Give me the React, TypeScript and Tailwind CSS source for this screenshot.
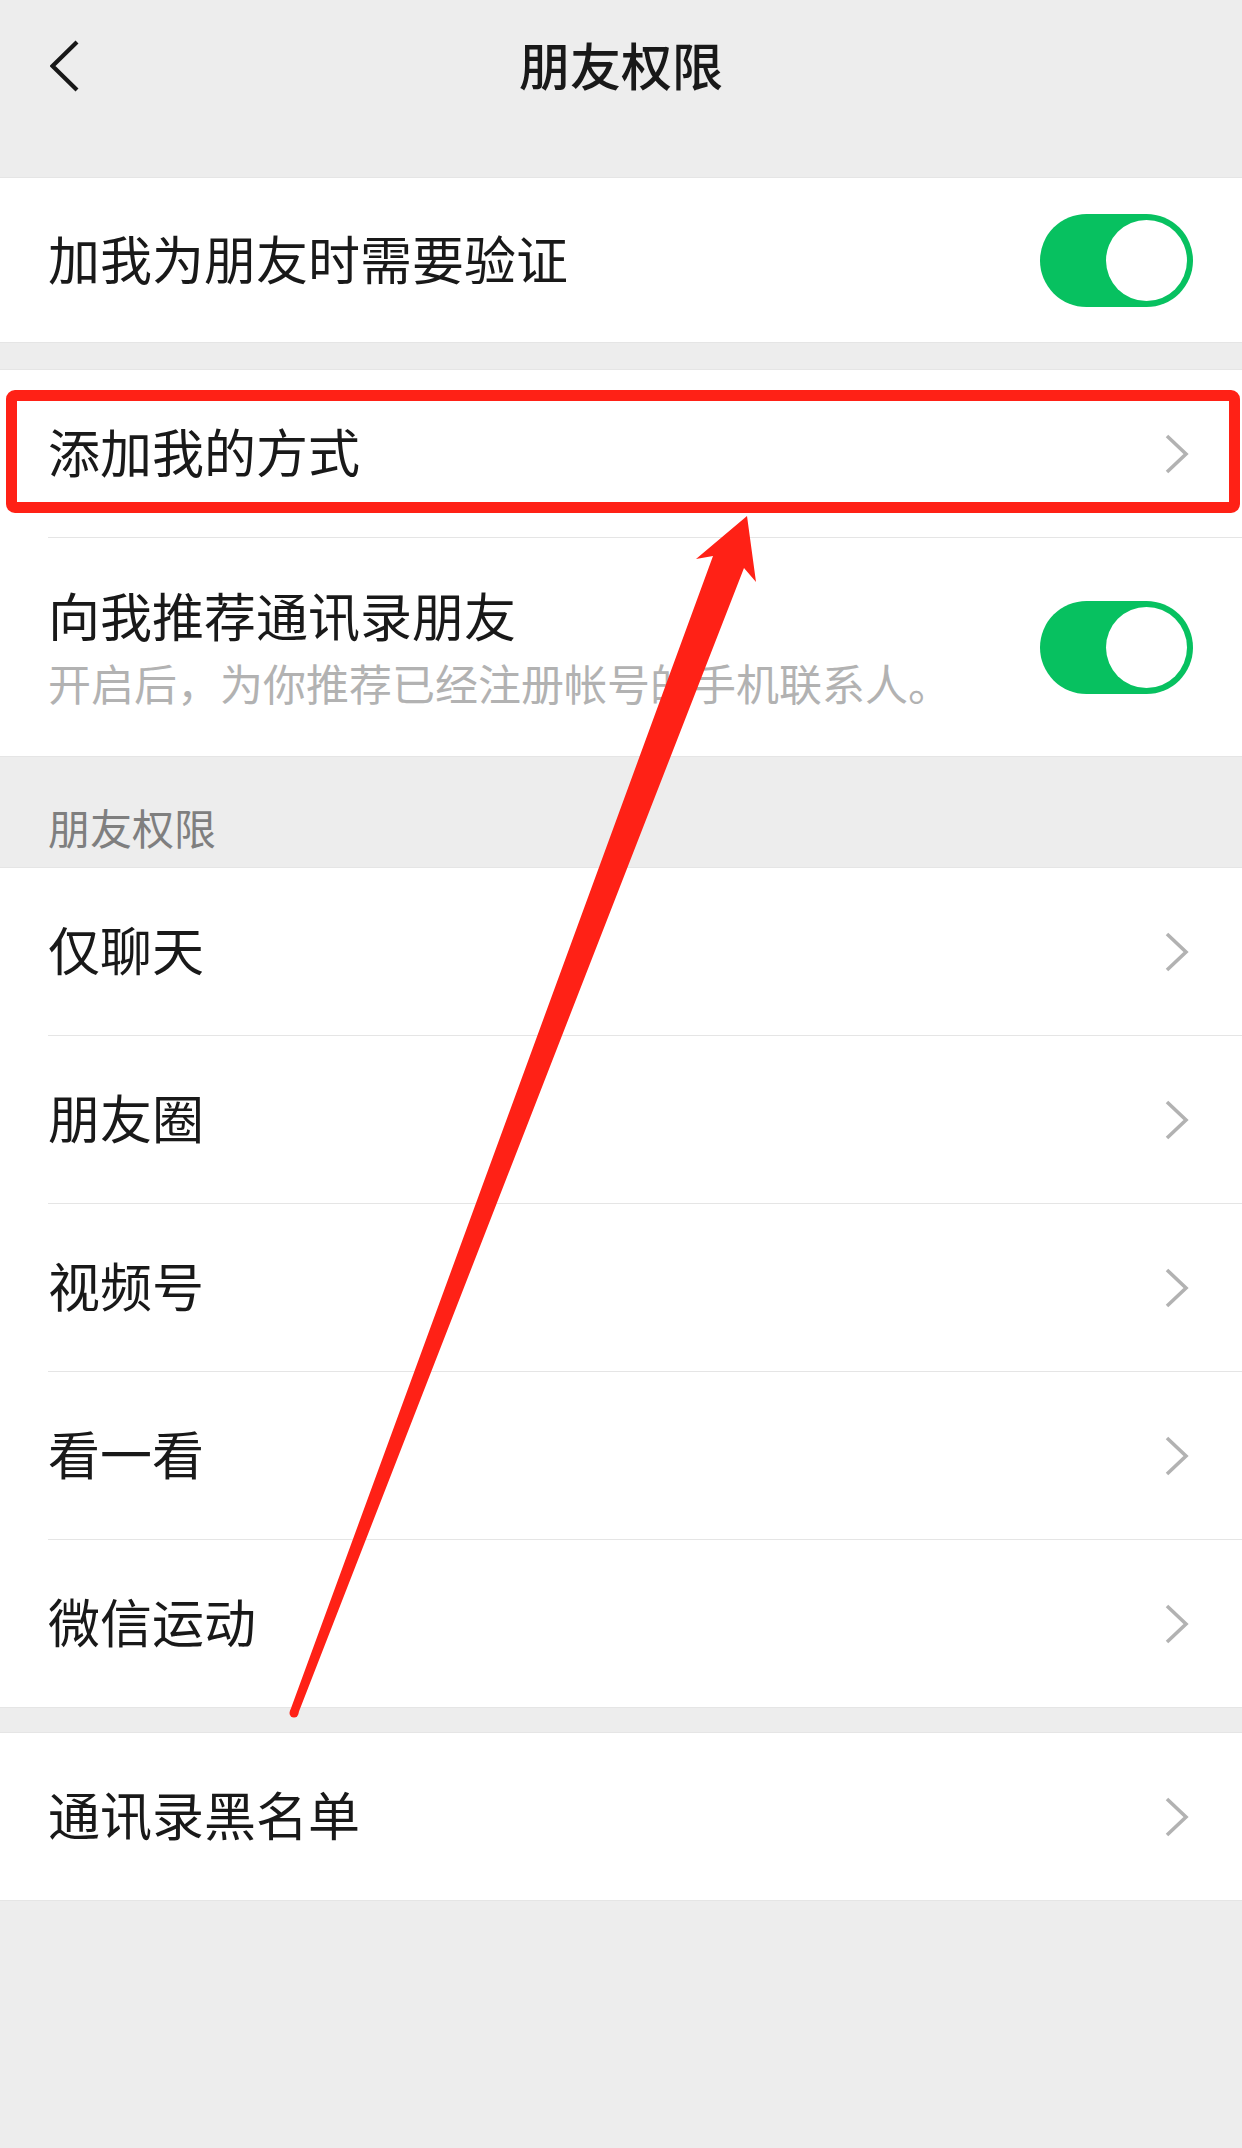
import React from "react";

const FONT = { fontFamily: '"Noto Sans CJK SC", "Noto Sans", sans-serif' };

function Chevron() {
  return (
    <svg width="26" height="40" viewBox="0 0 26 40" className="shrink-0">
      <polyline points="3,2 22,20 3,38" fill="none" stroke="#b2b2b2" strokeWidth="3.6" strokeLinejoin="miter" />
    </svg>
  );
}

function Toggle() {
  return (
    <div className="w-[153px] h-[93px] rounded-full bg-[#07c160] flex items-center justify-end px-[6px] shrink-0">
      <div className="w-[81px] h-[81px] rounded-full bg-white" />
    </div>
  );
}

function Sep() {
  return <div className="ml-[48px] h-px bg-[#e5e5e5]" />;
}

function LinkRow({ label }: { label: string }) {
  return (
    <div className="h-[167px] flex items-center justify-between pl-[48px] pr-[52px]">
      <span className="text-[52px] leading-[72px] pb-[5px] text-[#191919]">{label}</span>
      <Chevron />
    </div>
  );
}

export default function App() {
  return (
    <div className="relative w-[1242px] min-h-[2148px] bg-[#ededed] overflow-hidden" style={FONT}>
      {/* Header */}
      <div className="h-[177px] grid grid-cols-[1fr_auto_1fr] items-start pt-[28px]">
        <div className="pt-[12px] pl-[50px]">
          <svg width="30" height="52" viewBox="0 0 30 52">
            <polyline points="27,2 2.5,26 27,50" fill="none" stroke="#181818" strokeWidth="4.2" />
          </svg>
        </div>
        <div className="text-[51px] leading-[72px] font-medium text-[#191919] whitespace-nowrap">朋友权限</div>
        <div />
      </div>

      {/* Section 1 */}
      <div className="bg-white border-y border-[#e5e5e5]">
        <div className="h-[164px] flex items-center justify-between pl-[48px] pr-[49px]">
          <span className="text-[52px] leading-[72px] pb-[5px] text-[#191919]">加我为朋友时需要验证</span>
          <Toggle />
        </div>
      </div>

      <div className="h-[26px]" />

      {/* Section 2 */}
      <div className="bg-white border-y border-[#e5e5e5]">
        <LinkRow label="添加我的方式" />
        <Sep />
        <div className="h-[218px] flex items-center justify-between pl-[48px] pr-[49px]">
          <div className="flex flex-col pb-[5px]">
            <span className="text-[52px] leading-[72px] text-[#191919]">向我推荐通讯录朋友</span>
            <span className="mt-[2px] text-[43px] leading-[58px] text-[#b2b2b2]">开启后，为你推荐已经注册帐号的手机联系人。</span>
          </div>
          <Toggle />
        </div>
      </div>

      {/* Section header */}
      <div className="h-[110px] flex items-end pl-[48px] pb-[11px]">
        <span className="text-[42px] leading-[58px] text-[#7f7f7f]">朋友权限</span>
      </div>

      {/* Section 3 */}
      <div className="bg-white border-y border-[#e5e5e5]">
        <LinkRow label="仅聊天" />
        <Sep />
        <LinkRow label="朋友圈" />
        <Sep />
        <LinkRow label="视频号" />
        <Sep />
        <LinkRow label="看一看" />
        <Sep />
        <LinkRow label="微信运动" />
      </div>

      <div className="h-[24px]" />

      {/* Section 4 */}
      <div className="bg-white border-y border-[#e5e5e5]">
        <LinkRow label="通讯录黑名单" />
      </div>

      {/* Red highlight box */}
      <div className="absolute left-[6px] top-[390px] w-[1234px] h-[123px] border-[11px] border-[#ff2116] rounded-[9px] pointer-events-none" />

      {/* Red arrow */}
      <svg className="absolute left-0 top-0 pointer-events-none" width="1242" height="2148" viewBox="0 0 1242 2148">
        <polygon
          points="747,516 756,582 744,568 298,1714 290,1711 713,556 696,559"
          fill="#ff2116"
          strokeLinejoin="round"
        />
        <circle cx="294" cy="1713" r="4.5" fill="#ff2116" />
      </svg>
    </div>
  );
}
